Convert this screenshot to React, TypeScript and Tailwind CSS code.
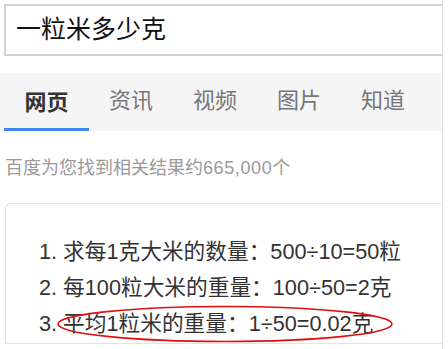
const TABS = ["网页", "资讯", "视频", "图片", "知道"];

const STEPS = [
  "1. 求每1克大米的数量：500÷10=50粒",
  "2. 每100粒大米的重量：100÷50=2克",
  "3. 平均1粒米的重量：1÷50=0.02克",
];

export default function App() {
  return (
    <div className="h-[349px] w-[448px] overflow-hidden bg-white font-['Liberation_Sans','Noto_Sans_CJK_SC',sans-serif]">
      <div className="h-full w-[443px] border-r border-[#e2e2e2]">
        {/* search box */}
        <div className="pl-1 pt-1">
          <div className="flex h-[52px] items-center border-2 border-r-0 border-[#d2d2d2] pl-[10px] text-[25px] text-[#111]">
            一粒米多少克
          </div>
        </div>

        {/* tabs */}
        <div className="mt-[17px] flex h-[58px] bg-[#f5f5f6] pl-1">
          {TABS.map((tab, i) => (
            <div
              key={tab}
              className={
                i === 0
                  ? "flex w-[85px] items-center justify-center border-b-[3px] border-[#3f86f5] pt-[3px] text-[22px] font-bold text-[#333]"
                  : "flex w-[84px] items-center justify-center pb-[3px] text-[22px] text-[#777]"
              }
            >
              {tab}
            </div>
          ))}
        </div>

        <p className="mt-[26px] pl-[5px] text-[18px] leading-[22px] text-[#9a9a9a]">
          百度为您找到相关结果约<span className="tracking-[0.6px]">665,000</span>个
        </p>

        {/* answer card */}
        <div className="relative ml-[5px] mt-[24px] h-[141px] rounded-tl-md border border-r-0 border-[#e4e4e4] pl-[33px] pt-[30px] text-[21.7px] leading-[36px] text-[#333]">
          {STEPS.map((s) => (
            <div key={s}>{s}</div>
          ))}
          <svg
            className="pointer-events-none absolute left-[45px] top-[99px]"
            width="352"
            height="42"
            viewBox="0 0 352 42"
          >
            <ellipse cx="174" cy="21" rx="167" ry="17.5" fill="none" stroke="#e01010" strokeWidth="1.6" />
          </svg>
        </div>
      </div>
    </div>
  );
}
